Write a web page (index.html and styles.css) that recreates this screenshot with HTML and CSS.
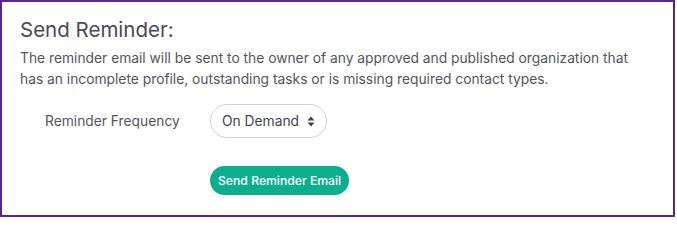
FILE: index.html
```html
<!DOCTYPE html>
<html>
<head>
<meta charset="utf-8">
<link rel="stylesheet" href="styles.css">
</head>
<body>
<div class="panel">
  <h2 class="title">Send Reminder:</h2>
  <p class="desc">The reminder email will be sent to the owner of any approved and published organization that has an incomplete profile, outstanding tasks or is missing required contact types.</p>
  <div class="row">
    <label class="label">Reminder Frequency</label>
    <div class="select">
      <span>On Demand</span>
      <svg class="caret" width="8" height="11" viewBox="0 0 8 11"><path d="M4 0.5 L7.5 4.5 H0.5 Z M4 10.5 L0.5 6.5 H7.5 Z" fill="#444"/></svg>
    </div>
  </div>
  <div class="actions">
    <button class="btn">Send Reminder Email</button>
  </div>
</div>
</body>
</html>
```
FILE: styles.css
```css
html, body { margin: 0; padding: 0; background: #fff; }
body { font-family: Inter, "Noto Sans", sans-serif; color: #555560; }
.panel {
  width: 675px;
  height: 217px;
  box-sizing: border-box;
  border: 2px solid #5f2391;
  padding: 14px 18px 0 18px;
}
.title {
  margin: 0;
  font-weight: 400;
  font-size: 20.5px;
  line-height: 28px;
  color: #4a4a58;
}
.desc {
  margin: 4px 0 0 0;
  font-size: 13.8px;
  line-height: 21px;
  color: #555560;
}
.row {
  display: flex;
  align-items: center;
  margin-top: 14px;
}
.label {
  width: 165px;
  padding-left: 25px;
  font-size: 13.8px;
  color: #555560;
}
.select {
  display: flex;
  align-items: center;
  gap: 8px;
  height: 34px;
  box-sizing: border-box;
  padding: 0 11px 0 11px;
  border: 1px solid #cfd2d8;
  border-radius: 17px;
  font-size: 13.8px;
  color: #444450;
}
.actions {
  margin-top: 28px;
  padding-left: 190px;
}
.btn {
  height: 29px;
  padding: 0 8px;
  border: none;
  border-radius: 15px;
  background: #0caf8d;
  color: #fff;
  font-family: Inter, "Noto Sans", sans-serif;
  font-size: 12.2px;
  font-weight: 500;
}
```
